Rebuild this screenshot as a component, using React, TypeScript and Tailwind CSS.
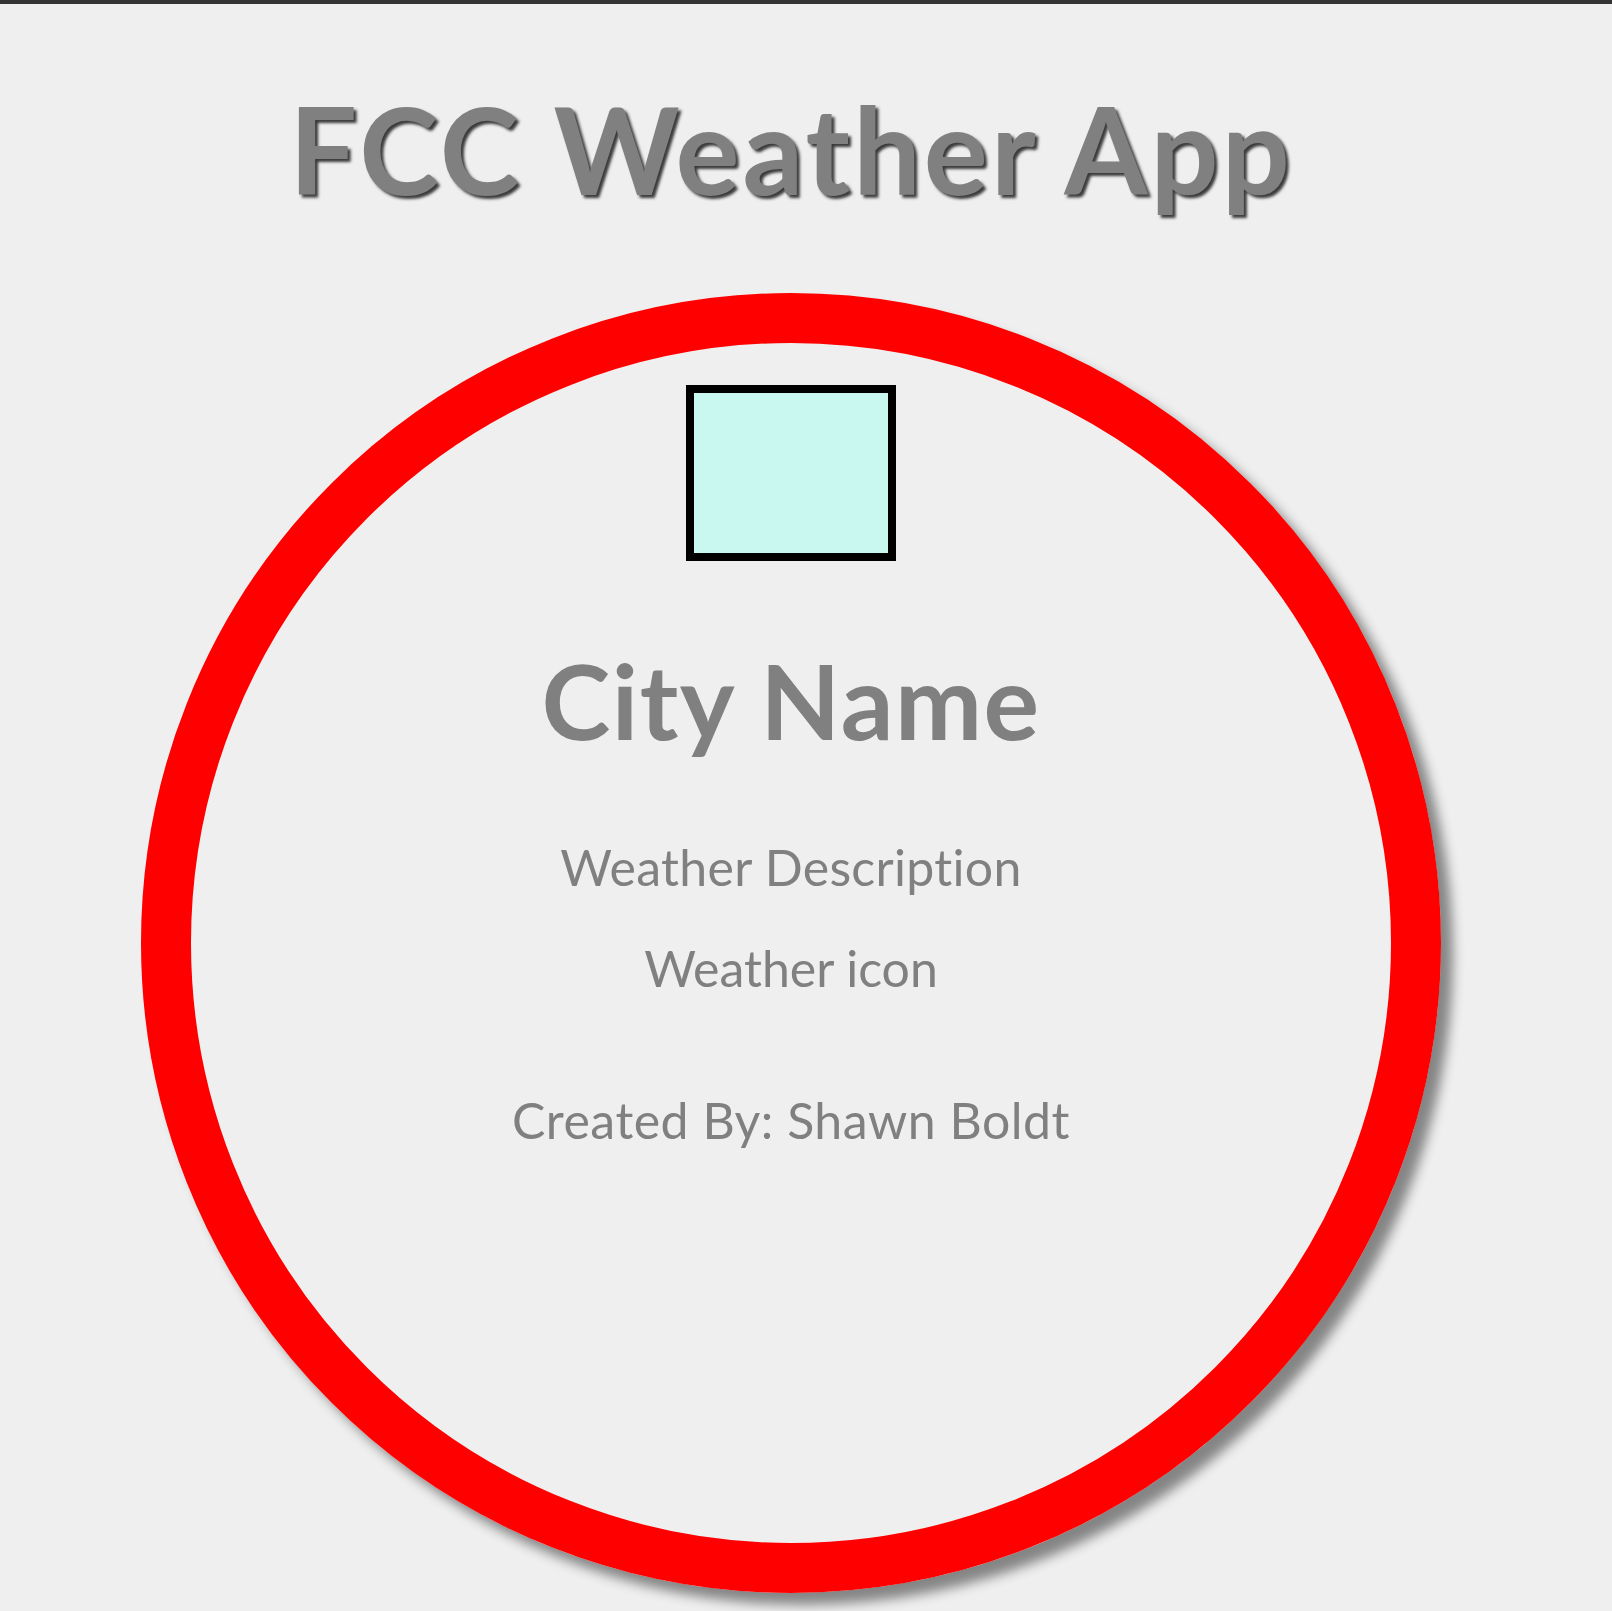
export default function App() {
  return (
    <div className="min-h-[1611px] bg-[#efefef] border-t-4 border-[#333333] pr-[30px] font-['Lato','Liberation_Sans',sans-serif] text-[#808080]">
      <div className="flex flex-col items-center">
        <h1 className="mt-[85px] text-[120px] leading-none font-bold tracking-[3px] [text-shadow:3px_3px_3px_#3a3a3a]">
          FCC Weather App
        </h1>

        <div className="mt-[84px] w-[1300px] h-[1300px] rounded-full border-[50px] border-[#ff0000] shadow-[12px_12px_12px_#858585] flex flex-col items-center">
          <div className="mt-[42px] w-[210px] h-[176px] border-8 border-black bg-[#c8f8f0]" />
          <div className="mt-[87px] text-[104px] leading-none font-bold tracking-[1.5px]">City Name</div>
          <div className="mt-[90px] text-[50px] leading-none tracking-[0.3px]">Weather Description</div>
          <div className="mt-[51px] text-[50px] leading-none">Weather icon</div>
          <div className="mt-[102px] text-[50px] leading-none tracking-[0.5px]">Created By: Shawn Boldt</div>
        </div>
      </div>
    </div>
  );
}
